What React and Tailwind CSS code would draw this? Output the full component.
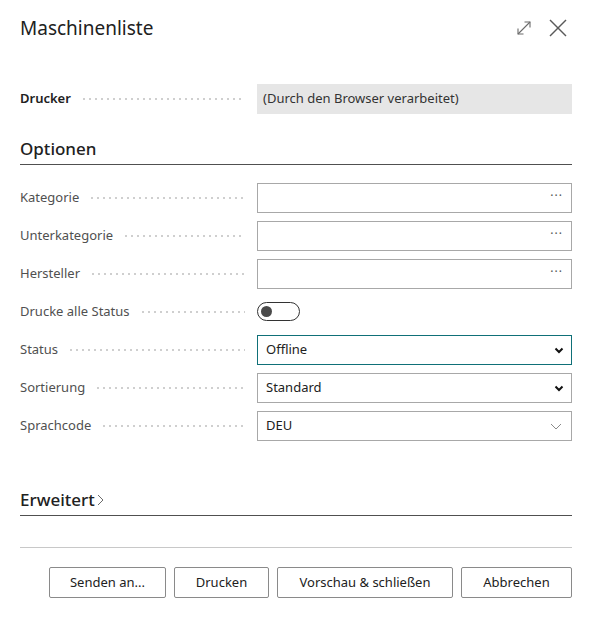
import React from "react";

const font = { fontFamily: '"Segoe UI", "Noto Sans", "Open Sans", sans-serif' };

function Dots() {
  return (
    <div className="flex-1 h-[2px] ml-[10px] bg-[radial-gradient(circle,#cfcfcf_0.8px,transparent_1px)] bg-[length:6px_2px] bg-repeat-x" />
  );
}

function Row({ label, bold, children }) {
  return (
    <div className="flex items-center h-[30px]">
      <div className="w-[225px] flex items-center">
        <span className={bold ? "text-[13px] font-semibold text-[#212121]" : "text-[13px] text-[#505050]"}>{label}</span>
        <Dots />
      </div>
      <div className="w-[12px]" />
      <div className="flex-1 h-full">{children}</div>
    </div>
  );
}

function Lookup() {
  return (
    <div className="h-full border border-[#a8a8a8] flex items-center justify-end pr-[8px]">
      <span className="text-[12px] text-[#555555] tracking-[1px] leading-none -mt-[4px]">···</span>
    </div>
  );
}

function Select({ value, focused, thin }) {
  return (
    <div className={"h-full flex items-center justify-between pl-[8px] pr-[6px] border " + (focused ? "border-[#0f7078]" : "border-[#a8a8a8]")}>
      <span className="text-[13px] text-[#212121]">{value}</span>
      {thin ? (
        <svg width="14" height="14" viewBox="0 0 14 14" className="mr-[2px]">
          <path d="M2 5 L7 10 L12 5" fill="none" stroke="#8a8a8a" strokeWidth="1" />
        </svg>
      ) : (
        <svg width="12" height="12" viewBox="0 0 12 12">
          <path d="M2.5 4.5 L6 8 L9.5 4.5" fill="none" stroke="#111" strokeWidth="2" />
        </svg>
      )}
    </div>
  );
}

export default function App() {
  return (
    <div className="w-[594px] h-[619px] bg-white pl-5 pr-[22px]" style={font}>
      <div className="flex items-center justify-between h-[56px]">
        <div className="text-[19px] text-[#212121]">Maschinenliste</div>
        <div className="flex items-center gap-[15px] mr-[4px]">
          <svg width="18" height="18" viewBox="0 0 18 18">
            <g fill="none" stroke="#6b6b6b" strokeWidth="1.1">
              <path d="M3 15 L15 3" />
              <path d="M9.5 3 H15 V8.5" />
              <path d="M3 9.5 V15 H8.5" />
            </g>
          </svg>
          <svg width="20" height="20" viewBox="0 0 20 20">
            <g fill="none" stroke="#5a5a5a" strokeWidth="1.5">
              <path d="M2 2 L18 18" />
              <path d="M18 2 L2 18" />
            </g>
          </svg>
        </div>
      </div>

      <div className="mt-[28px]">
        <Row label="Drucker" bold>
          <div className="h-full bg-[#e6e6e6] flex items-center pl-[6px]">
            <span className="text-[13px] text-[#333]">(Durch den Browser verarbeitet)</span>
          </div>
        </Row>
      </div>

      <div className="mt-[22px] border-b border-[#505050] pb-[2px]">
        <div className="text-[17px] text-[#212121] font-medium">Optionen</div>
      </div>

      <div className="mt-[18px] flex flex-col gap-[8px]">
        <Row label="Kategorie"><Lookup /></Row>
        <Row label="Unterkategorie"><Lookup /></Row>
        <Row label="Hersteller"><Lookup /></Row>
        <Row label="Drucke alle Status">
          <div className="h-full flex items-center">
            <div className="w-[43px] h-[19px] rounded-full border border-[#333] flex items-center pl-[3px]">
              <div className="w-[11px] h-[11px] rounded-full bg-[#4a4a4a]" />
            </div>
          </div>
        </Row>
        <Row label="Status"><Select value="Offline" focused /></Row>
        <Row label="Sortierung"><Select value="Standard" /></Row>
        <Row label="Sprachcode"><Select value="DEU" thin /></Row>
      </div>

      <div className="mt-[46px] border-b border-[#505050] pb-[3px]">
        <div className="flex items-center">
          <span className="text-[17px] text-[#212121] font-medium">Erweitert</span>
          <svg width="10" height="14" viewBox="0 0 10 14" className="ml-[1px] mt-[2px]">
            <path d="M2 2 L7 7 L2 12" fill="none" stroke="#6b6b6b" strokeWidth="1" />
          </svg>
        </div>
      </div>

      <div className="mt-[31px] border-t border-[#c8c8c8]" />

      <div className="mt-[19px] flex justify-end gap-[8px]">
        {[
          ["Senden an...", "w-[117px]"],
          ["Drucken", "w-[95px]"],
          ["Vorschau & schließen", "w-[176px]"],
          ["Abbrechen", "w-[111px]"],
        ].map(([t, w]) => (
          <div key={t} className={w + " h-[31px] border border-[#8a8a8a] rounded-[2px] flex items-center justify-center text-[13px] text-[#212121]"}>
            {t}
          </div>
        ))}
      </div>
    </div>
  );
}
